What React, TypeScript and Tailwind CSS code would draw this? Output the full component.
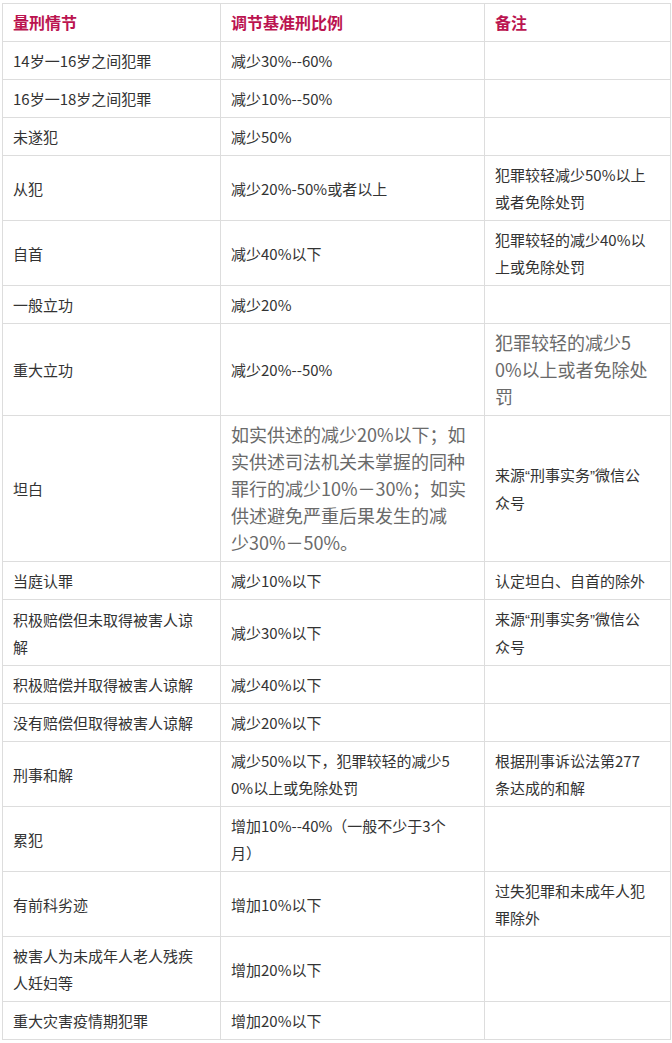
import React from "react";

type Cell = { lines: React.ReactNode[]; big?: boolean };
type Row = [Cell, Cell, Cell];

const Q = ({ c }: { c: string }) => (
  <span style={{ fontFamily: '"Liberation Sans", sans-serif' }}>{c}</span>
);

const src: React.ReactNode[] = [
  <>
    来源<Q c="“" />刑事实务<Q c="”" />微信公
  </>,
  "众号",
];

const c = (...lines: React.ReactNode[]): Cell => ({ lines });
const b = (...lines: React.ReactNode[]): Cell => ({ lines, big: true });
const e: Cell = { lines: [] };

const rows: Row[] = [
  [c("14岁一16岁之间犯罪"), c("减少30%--60%"), e],
  [c("16岁一18岁之间犯罪"), c("减少10%--50%"), e],
  [c("未遂犯"), c("减少50%"), e],
  [c("从犯"), c("减少20%-50%或者以上"), c("犯罪较轻减少50%以上", "或者免除处罚")],
  [c("自首"), c("减少40%以下"), c("犯罪较轻的减少40%以", "上或免除处罚")],
  [c("一般立功"), c("减少20%"), e],
  [c("重大立功"), c("减少20%--50%"), b("犯罪较轻的减少5", "0%以上或者免除处", "罚")],
  [
    c("坦白"),
    b(
      "如实供述的减少20%以下；如",
      "实供述司法机关未掌握的同种",
      "罪行的减少10%－30%；如实",
      "供述避免严重后果发生的减",
      "少30%－50%。"
    ),
    c(...src),
  ],
  [c("当庭认罪"), c("减少10%以下"), c("认定坦白、自首的除外")],
  [c("积极赔偿但未取得被害人谅", "解"), c("减少30%以下"), c(...src)],
  [c("积极赔偿并取得被害人谅解"), c("减少40%以下"), e],
  [c("没有赔偿但取得被害人谅解"), c("减少20%以下"), e],
  [
    c("刑事和解"),
    c("减少50%以下，犯罪较轻的减少5", "0%以上或免除处罚"),
    c("根据刑事诉讼法第277", "条达成的和解"),
  ],
  [c("累犯"), c("增加10%--40%（一般不少于3个", "月）"), e],
  [c("有前科劣迹"), c("增加10%以下"), c("过失犯罪和未成年人犯", "罪除外")],
  [c("被害人为未成年人老人残疾", "人妊妇等"), c("增加20%以下"), e],
  [c("重大灾害疫情期犯罪"), c("增加20%以下"), e],
];

function Td({ cell }: { cell: Cell }) {
  return (
    <td
      className={
        "border border-[#dddddd] px-[10px] py-[5px] align-middle leading-[27px] whitespace-nowrap overflow-visible " +
        (cell.big ? "text-[18px] text-[#6a6a6a]" : "text-[15px] text-[#333333]")
      }
    >
      {cell.lines.map((l, i) => (
        <React.Fragment key={i}>
          {i > 0 && <br />}
          {l}
        </React.Fragment>
      ))}
    </td>
  );
}

export default function App() {
  return (
    <div
      className="w-[672px] h-[1043px] bg-white overflow-hidden pt-[3px] pl-[2px]"
      style={{ fontFamily: '"Noto Sans CJK SC", "Noto Sans", sans-serif' }}
    >
      <table className="table-fixed border-collapse w-[668px]">
        <colgroup>
          <col className="w-[218px]" />
          <col className="w-[264px]" />
          <col className="w-[186px]" />
        </colgroup>
        <thead>
          <tr>
            {["量刑情节", "调节基准刑比例", "备注"].map((h) => (
              <th
                key={h}
                className="border border-[#dddddd] px-[10px] py-[5px] text-left align-middle leading-[27px] text-[16px] font-bold text-[#bb1450]"
              >
                {h}
              </th>
            ))}
          </tr>
        </thead>
        <tbody>
          {rows.map((r, i) => (
            <tr key={i}>
              <Td cell={r[0]} />
              <Td cell={r[1]} />
              <Td cell={r[2]} />
            </tr>
          ))}
        </tbody>
      </table>
    </div>
  );
}
